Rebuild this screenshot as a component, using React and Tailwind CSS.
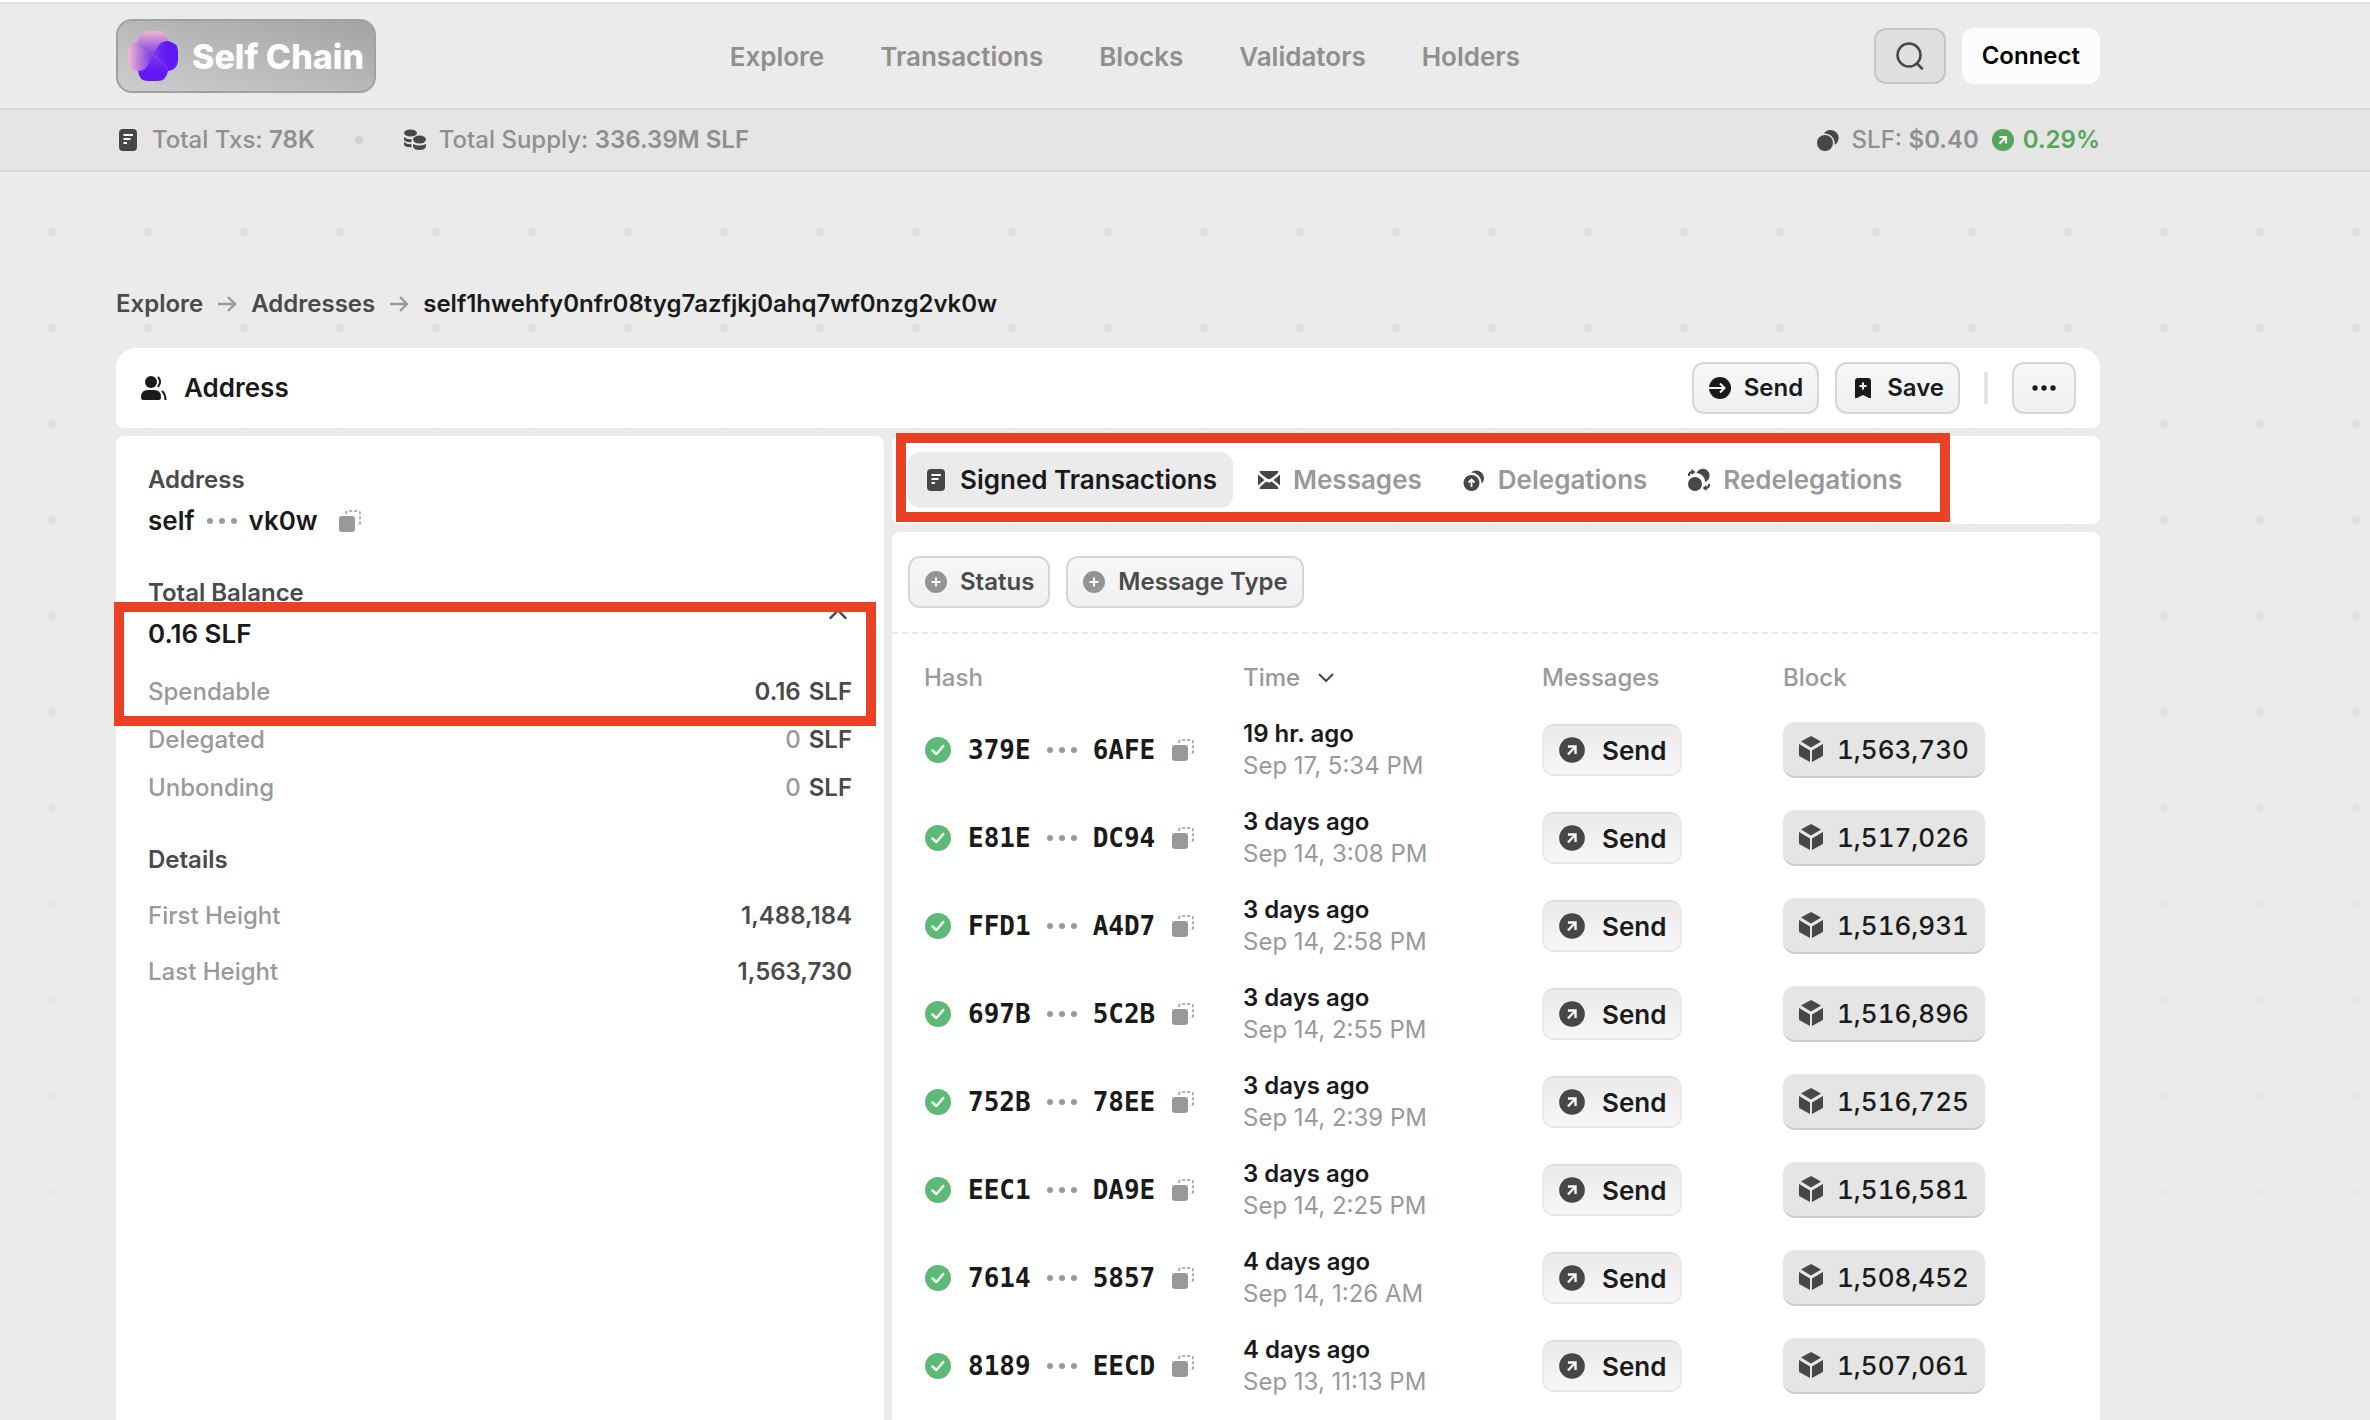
import { useState } from 'react';

const navLinks = ['Explore', 'Transactions', 'Blocks', 'Validators', 'Holders'];

const balances = [
  { label: 'Spendable', value: '0.16' },
  { label: 'Delegated', value: '0' },
  { label: 'Unbonding', value: '0' },
];

const details = [
  { label: 'First Height', value: '1,488,184' },
  { label: 'Last Height', value: '1,563,730' },
];

const transactions = [
  { start: '379E', end: '6AFE', ago: '19 hr. ago', date: 'Sep 17, 5:34 PM', block: '1,563,730' },
  { start: 'E81E', end: 'DC94', ago: '3 days ago', date: 'Sep 14, 3:08 PM', block: '1,517,026' },
  { start: 'FFD1', end: 'A4D7', ago: '3 days ago', date: 'Sep 14, 2:58 PM', block: '1,516,931' },
  { start: '697B', end: '5C2B', ago: '3 days ago', date: 'Sep 14, 2:55 PM', block: '1,516,896' },
  { start: '752B', end: '78EE', ago: '3 days ago', date: 'Sep 14, 2:39 PM', block: '1,516,725' },
  { start: 'EEC1', end: 'DA9E', ago: '3 days ago', date: 'Sep 14, 2:25 PM', block: '1,516,581' },
  { start: '7614', end: '5857', ago: '4 days ago', date: 'Sep 14, 1:26 AM', block: '1,508,452' },
  { start: '8189', end: 'EECD', ago: '4 days ago', date: 'Sep 13, 11:13 PM', block: '1,507,061' },
];

// Icons
const LogoMark = () => (
  <svg className="h-[50px] w-[50px]" viewBox="0 0 50 50" aria-hidden="true">
    <defs>
      <linearGradient id="petal-top" x1="0" y1="0" x2="0" y2="1">
        <stop offset="0" stopColor="#f0b4cf" />
        <stop offset="1" stopColor="#7a3be8" />
      </linearGradient>
      <linearGradient id="petal-left" x1="0" y1="0" x2="1" y2="0">
        <stop offset="0" stopColor="#f3b9cf" />
        <stop offset="1" stopColor="#7434ea" />
      </linearGradient>
      <linearGradient id="petal-right" x1="0" y1="0" x2="1" y2="0">
        <stop offset="0" stopColor="#7a38ea" />
        <stop offset="0.6" stopColor="#5f18f5" />
      </linearGradient>
      <linearGradient id="petal-bottom" x1="0" y1="0" x2="0" y2="1">
        <stop offset="0" stopColor="#7a38ea" />
        <stop offset="0.6" stopColor="#6319f6" />
      </linearGradient>
    </defs>
    <path d="M10 30 25 24 36 33Q40 37 40 40Q38 50 30 50H20Q11 50 10 40Z" fill="url(#petal-bottom)" />
    <path d="M10 10Q11 0 20 0H30Q39 0 40 10V20L25 24 14 18Q10 15 10 10Z" fill="url(#petal-top)" />
    <path d="M10 10Q0 12 0 20V30Q1 40 10 40Q16 40 19 36L25 24 14 18Q10 15 10 10Z" fill="url(#petal-left)" />
    <path d="M25 24 31 14Q34 10 40 10Q50 12 50 20V30Q49 39 40 40Q40 37 36 33Z" fill="url(#petal-right)" />
  </svg>
);

const DocIcon = () => (
  <svg className="h-6 w-6 shrink-0" viewBox="0 0 24 24" fill="none" aria-hidden="true">
    <rect x="3" y="1" width="18" height="22" rx="4" fill="#474747" />
    <path d="M7.500 7H17M7.500 11h7M7.500 15H11" stroke="#fff" strokeWidth="2" />
  </svg>
);

const CoinsStackIcon = () => (
  <svg className="h-6 w-6 shrink-0" viewBox="0 0 24 24" fill="#474747" aria-hidden="true">
    <ellipse cx="7.500" cy="5" rx="6.500" ry="3.500" />
    <path d="M1 9q3 2.500 7.500 2.200v3Q3 14.500 1 12zM1 14q3 2.500 7.500 2.200v3Q3 19.500 1 17z" />
    <ellipse cx="16.500" cy="11.500" rx="6.500" ry="4" />
    <path d="M10 16q6.500 3 13 0v2.500q-1 3.500-6.500 3.500T10 18.500z" />
  </svg>
);

const TokenIcon = () => (
  <svg className="h-6 w-6 shrink-0" viewBox="0 0 24 24" fill="#474747" aria-hidden="true">
    <path d="M8 5.500A8 8 0 1 1 18.500 17 9.800 9.800 0 0 0 8 5.500Z" />
    <circle cx="9" cy="15" r="8" />
  </svg>
);

const DelegateIcon = () => (
  <svg className="h-6 w-6 shrink-0" viewBox="0 0 24 24" fill="none" aria-hidden="true">
    <path d="M9 4.500A7.500 7.500 0 1 1 19.500 16 10.500 10.500 0 0 0 9 4.500Z" fill="#474747" />
    <circle cx="9.500" cy="15" r="8" fill="#474747" />
    <path d="M9.500 19v-7M6.500 14.500l3-3 3 3" stroke="#fff" strokeWidth="1.800" />
  </svg>
);

const RedelegateIcon = () => (
  <svg className="h-6 w-6 shrink-0" viewBox="0 0 24 24" fill="none" aria-hidden="true">
    <path d="M9.500 5A6.800 6.800 0 1 1 18 14 9 9 0 0 0 9.500 5Z" fill="#474747" />
    <circle cx="8" cy="16" r="7" fill="#474747" />
    <path d="M2 8V7q0-3 3.500-3M22 16v1q0 3-3.500 3" stroke="#474747" strokeWidth="2" />
    <path d="M4.500 1v6L8.500 4ZM19.500 17v6L15.500 20Z" fill="#474747" />
  </svg>
);

const MailIcon = () => (
  <svg className="h-6 w-6 shrink-0" viewBox="0 0 24 24" fill="#474747" aria-hidden="true">
    <path d="M2.500 3h19q-.3 2-1.500 3l-6 4.500q-2 1.500-4 0L4 6Q2.800 5 2.500 3ZM1 6.500 7.500 12 1 17.500ZM23 6.500 16.500 12 23 17.500ZM2.500 21q.3-2 1.500-3l5.200-4.500q2.800 2 5.600 0L20 18q1.200 1 1.500 3Z" />
  </svg>
);

const UsersIcon = () => (
  <svg className="h-7 w-7 shrink-0" viewBox="0 0 28 28" fill="none" aria-hidden="true">
    <circle cx="11" cy="8" r="6" fill="#1a1a1a" />
    <path d="M1 23q0-7 7-7h6q7 0 7 7 0 3-2 3H3q-2 0-2-3Z" fill="#1a1a1a" />
    <path d="M18 3q4 4.500 0 10M22 17q3.500 3 3.500 9" stroke="#1a1a1a" strokeWidth="2" />
  </svg>
);

const SearchIcon = () => (
  <svg className="h-7 w-7" viewBox="0 0 28 28" fill="none" stroke="#474747" strokeWidth="2.500" strokeLinecap="round" aria-hidden="true">
    <circle cx="13" cy="13" r="11.500" />
    <path d="m21 21.500 5 5" />
  </svg>
);

const ArrowRightIcon = () => (
  <svg className="h-6 w-6 shrink-0" viewBox="0 0 24 24" fill="none" stroke="#999" strokeWidth="2.400" aria-hidden="true">
    <path d="M3 12h17M13 5l7 7-7 7" />
  </svg>
);

const ChevronIcon = ({ className }) => (
  <svg className={className} viewBox="0 0 24 24" fill="none" stroke="#474747" strokeWidth="2" aria-hidden="true">
    <path d="m5 8 7 7 7-7" />
  </svg>
);

const CopyIcon = () => (
  <svg className="h-6 w-6" viewBox="0 0 24 24" fill="none" aria-hidden="true">
    <rect x="1" y="7" width="16" height="16" rx="3" fill="#999" />
    <path d="M8 5V4q0-2 2-2h10q2 0 2 2v10q0 2-2 2h-1" stroke="#999" strokeWidth="1.600" strokeDasharray="3 2" />
  </svg>
);

const Ellipsis = () => (
  <svg className="h-2 w-[30px] shrink-0" viewBox="0 0 30 8" fill="#999" aria-hidden="true">
    <circle cx="3" cy="4" r="3" />
    <circle cx="15" cy="4" r="3" />
    <circle cx="27" cy="4" r="3" />
  </svg>
);

const CheckIcon = () => (
  <svg className="h-7 w-7 shrink-0" viewBox="0 0 28 28" fill="none" aria-hidden="true">
    <circle cx="14" cy="14" r="13" fill="#5cba76" />
    <path d="m8.500 14.500 3.800 3.500 7-8" stroke="#fff" strokeWidth="2.400" strokeLinecap="round" strokeLinejoin="round" />
  </svg>
);

const ArrowUpBadge = ({ className, fill }) => (
  <svg className={className} viewBox="0 0 24 24" fill="none" aria-hidden="true">
    <circle cx="12" cy="12" r="11" fill={fill} />
    <path d="M8.500 9H15v6.500M15 9l-6.500 6.800" stroke="#fff" strokeWidth="2" />
  </svg>
);

const PlusBadge = () => (
  <svg className="h-6 w-6" viewBox="0 0 24 24" fill="none" aria-hidden="true">
    <circle cx="12" cy="12" r="11" fill="#949494" />
    <path d="M12 7.500v9M7.500 12h9" stroke="#fff" strokeWidth="2" />
  </svg>
);

const SendIcon = () => (
  <svg className="h-6 w-6" viewBox="0 0 24 24" fill="none" aria-hidden="true">
    <circle cx="12" cy="12" r="11" fill="#1a1a1a" />
    <path d="M1 12h15.500M12 7.500l4.500 4.500-4.500 4.500" stroke="#f4f4f4" strokeWidth="2" />
  </svg>
);

const BookmarkIcon = () => (
  <svg className="h-6 w-6" viewBox="0 0 24 24" fill="none" aria-hidden="true">
    <path d="M4 5q0-3 3-3h10q3 0 3 3v17l-2 0-6-3-6 3H4Z" fill="#1a1a1a" />
    <path d="M12 6.500v7M8.500 10h7" stroke="#f4f4f4" strokeWidth="2" />
  </svg>
);

const CubeIcon = () => (
  <svg className="h-7 w-6" viewBox="0 0 24 28" fill="#474747" aria-hidden="true">
    <path d="M12 1 22 6.500 12 12.500 2 6.500ZM0 9 11 15.500V27L1 21.500Q0 21 0 20ZM24 9 13 15.500V27L23 21.500Q24 21 24 20Z" />
  </svg>
);

const tabs = [
  { name: 'Signed Transactions', icon: DocIcon },
  { name: 'Messages', icon: MailIcon },
  { name: 'Delegations', icon: DelegateIcon },
  { name: 'Redelegations', icon: RedelegateIcon },
];

const SoftButton = ({ className = '', children, ...props }) => (
  <button
    className={`flex h-[52px] items-center gap-3 rounded-xl border-2 border-[#d6d6d6] bg-gradient-to-b from-[#f7f7f7] to-[#f0f0f0] px-[14px] text-2xl font-semibold ${className}`}
    {...props}
  >
    {children}
  </button>
);

const TransactionRow = ({ tx }) => (
  <tr className="h-[88px]">
    <td className="pl-8">
      <div className="flex items-center gap-4 font-['DejaVu_Sans_Mono',monospace] text-[26px] leading-8 font-bold">
        <CheckIcon />
        <span>{tx.start}</span>
        <Ellipsis />
        <span>{tx.end}</span>
        <button aria-label="Copy hash">
          <CopyIcon />
        </button>
      </div>
    </td>
    <td className="text-2xl leading-8">
      <p className="font-semibold">{tx.ago}</p>
      <p className="text-[#999]">{tx.date}</p>
    </td>
    <td>
      <span className="inline-flex h-[52px] items-center gap-4 rounded-xl border-2 border-[#e9e9e9] border-t-[#dfdfdf] bg-gradient-to-b from-[#eaeaea] to-[#f7f7f7] px-[14px] align-middle text-[26px] font-semibold">
        <ArrowUpBadge className="h-7 w-7" fill="#474747" />
        Send
      </span>
    </td>
    <td>
      <a
        href="#block"
        className="inline-flex h-14 items-center gap-[14px] rounded-xl border-b-2 border-[#cccccc] bg-[#e5e5e5] px-4 align-middle text-[26px] font-medium tabular-nums"
      >
        <CubeIcon />
        {tx.block}
      </a>
    </td>
  </tr>
);

export default function App() {
  const [activeTab, setActiveTab] = useState('Signed Transactions');
  const [showBalances, setShowBalances] = useState(true);

  return (
    <div className="flex min-h-screen flex-col bg-[#ebebeb] font-['Inter',sans-serif] text-[#1a1a1a] [font-optical-sizing:none]">
      {/* Header */}
      <header className="border-t-2 border-white">
        <div className="flex h-[108px] items-center justify-between border-y-2 border-t-[#e0e0e0] border-b-[#d9d9d9] pr-[270px] pl-[116px]">
          <a
            href="#home"
            className="flex h-[74px] items-center gap-[14px] rounded-2xl border-2 border-[#a0a0a0] bg-gradient-to-tr from-[#cecece] to-[#a3a3a3] px-[10px] text-[34px] font-extrabold text-white"
          >
            <LogoMark />
            Self Chain
          </a>
          <nav className="flex gap-14 text-[26px] font-semibold text-[#8f8f8f]">
            {navLinks.map((link) => (
              <a key={link} href="#nav">{link}</a>
            ))}
          </nav>
          <div className="flex gap-4">
            <button aria-label="Search" className="flex h-14 w-[72px] items-center justify-center rounded-xl border-2 border-[#c6c6c6] bg-[#dfdfdf]">
              <SearchIcon />
            </button>
            <button className="h-14 rounded-xl bg-[#fcfcfc] px-5 text-2xl font-semibold text-black">Connect</button>
          </div>
        </div>

        {/* Chain stats */}
        <div className="flex h-[62px] items-center justify-between border-b-2 border-[#d9d9d9] bg-[#e5e5e5] pr-[270px] pl-[116px] text-2xl font-medium text-[#8f8f8f]">
          <div className="flex items-center gap-10">
            <p className="flex items-center gap-3">
              <DocIcon />
              <span>Total Txs: <span className="font-semibold">78K</span></span>
            </p>
            <span className="h-2 w-2 rounded-full bg-[#d1d1d1]" />
            <p className="flex items-center gap-3">
              <CoinsStackIcon />
              <span>Total Supply: <span className="font-semibold">336.39M SLF</span></span>
            </p>
          </div>
          <div className="flex items-center gap-3">
            <TokenIcon />
            <span>SLF: <span className="font-semibold">$0.40</span></span>
            <span className="flex items-center gap-2 font-semibold text-[#54a65a]">
              <ArrowUpBadge className="h-6 w-6" fill="#54a65a" />
              0.29%
            </span>
          </div>
        </div>
      </header>

      <main className="flex grow flex-col bg-[linear-gradient(to_bottom,transparent_15%,#ebebeb),radial-gradient(circle,#dedede_4px,transparent_5px)] bg-[size:100%_100%,96px_96px] bg-[position:0_0,4px_12px] pt-[116px] pr-[270px] pl-[116px]">
        {/* Breadcrumbs */}
        <nav className="mb-7 flex items-center gap-3 text-2xl font-semibold text-[#4a4a4a]">
          <a href="#explore">Explore</a>
          <ArrowRightIcon />
          <a href="#addresses">Addresses</a>
          <ArrowRightIcon />
          <span className="text-[#1a1a1a]">self1hwehfy0nfr08tyg7azfjkj0ahq7wf0nzg2vk0w</span>
        </nav>

        {/* Title bar */}
        <div className="mb-2 flex h-20 items-center justify-between rounded-t-[20px] rounded-b-lg bg-white px-6">
          <h1 className="flex items-center gap-4 text-[26px] leading-8 font-semibold">
            <UsersIcon />
            Address
          </h1>
          <div className="flex items-center gap-4">
            <SoftButton>
              <SendIcon />
              Send
            </SoftButton>
            <SoftButton>
              <BookmarkIcon />
              Save
            </SoftButton>
            <span className="mx-2 h-8 w-1 bg-[#e5e5e5]" />
            <SoftButton className="w-16 justify-center" aria-label="More">
              <svg className="h-2 w-6" viewBox="0 0 24 8" fill="#1a1a1a" aria-hidden="true">
                <circle cx="3" cy="4" r="2.700" />
                <circle cx="12" cy="4" r="2.700" />
                <circle cx="21" cy="4" r="2.700" />
              </svg>
            </SoftButton>
          </div>
        </div>

        <div className="grid grow grid-cols-[768fr_1208fr] gap-2">
          {/* Address summary */}
          <aside className="relative rounded-t-lg bg-white px-8 pt-7 text-2xl leading-8 font-semibold">
            <h2 className="mb-[9px] text-[#4a4a4a]">Address</h2>
            <div className="flex items-center gap-3 text-[26px]">
              <span>self</span>
              <Ellipsis />
              <span>vk0w</span>
              <button aria-label="Copy address" className="ml-2">
                <CopyIcon />
              </button>
            </div>

            <div className="mt-10 flex items-center justify-between">
              <div>
                <h2 className="mb-[9px] text-[#4a4a4a]">Total Balance</h2>
                <p className="text-[26px]">0.16 SLF</p>
              </div>
              <button aria-label="Toggle balances" onClick={() => setShowBalances(!showBalances)}>
                <ChevronIcon className="h-7 w-7 rotate-180" />
              </button>
            </div>

            {showBalances && (
              <dl className="mt-[26px] flex flex-col gap-4">
                {balances.map((item) => (
                  <div key={item.label} className="flex justify-between">
                    <dt className="font-medium text-[#999]">{item.label}</dt>
                    <dd className="flex gap-2 text-[#4a4a4a]">
                      <span className={item.value === '0' ? 'font-medium text-[#999]' : ''}>{item.value}</span>
                      SLF
                    </dd>
                  </div>
                ))}
              </dl>
            )}

            <h2 className="mt-10 text-[#4a4a4a]">Details</h2>
            <dl className="mt-6 flex flex-col gap-6">
              {details.map((item) => (
                <div key={item.label} className="flex justify-between">
                  <dt className="font-medium text-[#999]">{item.label}</dt>
                  <dd className="text-[#4a4a4a]">{item.value}</dd>
                </div>
              ))}
            </dl>

            <div className="pointer-events-none absolute top-[166px] right-2 -left-[2px] h-[124px] border-10 border-[#ea4025]" />
          </aside>

          <section className="flex flex-col gap-2">
            {/* Tabs */}
            <div className="relative flex gap-2 rounded-lg bg-white p-4" role="tablist">
              {tabs.map(({ name, icon: Icon }) => (
                <button
                  key={name}
                  role="tab"
                  aria-selected={activeTab === name}
                  onClick={() => setActiveTab(name)}
                  className={`flex h-14 items-center gap-3 rounded-xl px-4 text-[26px] leading-8 font-semibold ${
                    activeTab === name ? 'bg-[#ebebeb]' : 'text-[#999]'
                  }`}
                >
                  <Icon />
                  {name}
                </button>
              ))}
              <div className="pointer-events-none absolute -top-[3px] bottom-[2px] left-1 w-[1054px] border-10 border-[#ea4025]" />
            </div>

            {/* Transactions */}
            <div className="grow rounded-t-lg bg-white">
              <div className="flex gap-4 px-4 py-6">
                <SoftButton className="text-[#4a4a4a]">
                  <PlusBadge />
                  Status
                </SoftButton>
                <SoftButton className="text-[#4a4a4a]">
                  <PlusBadge />
                  Message Type
                </SoftButton>
              </div>
              <div className="h-[2px] bg-[repeating-linear-gradient(to_right,#e8e8e8_0_6px,transparent_6px_10px)]" />
              <table className="w-full table-fixed text-left">
                <colgroup>
                  <col className="w-[351px]" />
                  <col className="w-[299px]" />
                  <col className="w-[241px]" />
                  <col />
                </colgroup>
                <thead>
                  <tr className="h-[72px] text-2xl text-[#999]">
                    <th className="pt-4 pl-8 font-medium">Hash</th>
                    <th className="pt-4 font-medium">
                      <button className="flex items-center gap-[14px]">
                        Time
                        <ChevronIcon className="h-6 w-6" />
                      </button>
                    </th>
                    <th className="pt-4 font-medium">Messages</th>
                    <th className="pt-4 font-medium">Block</th>
                  </tr>
                </thead>
                <tbody>
                  {transactions.map((tx) => (
                    <TransactionRow key={tx.block} tx={tx} />
                  ))}
                </tbody>
              </table>
            </div>
          </section>
        </div>
      </main>
    </div>
  );
}
